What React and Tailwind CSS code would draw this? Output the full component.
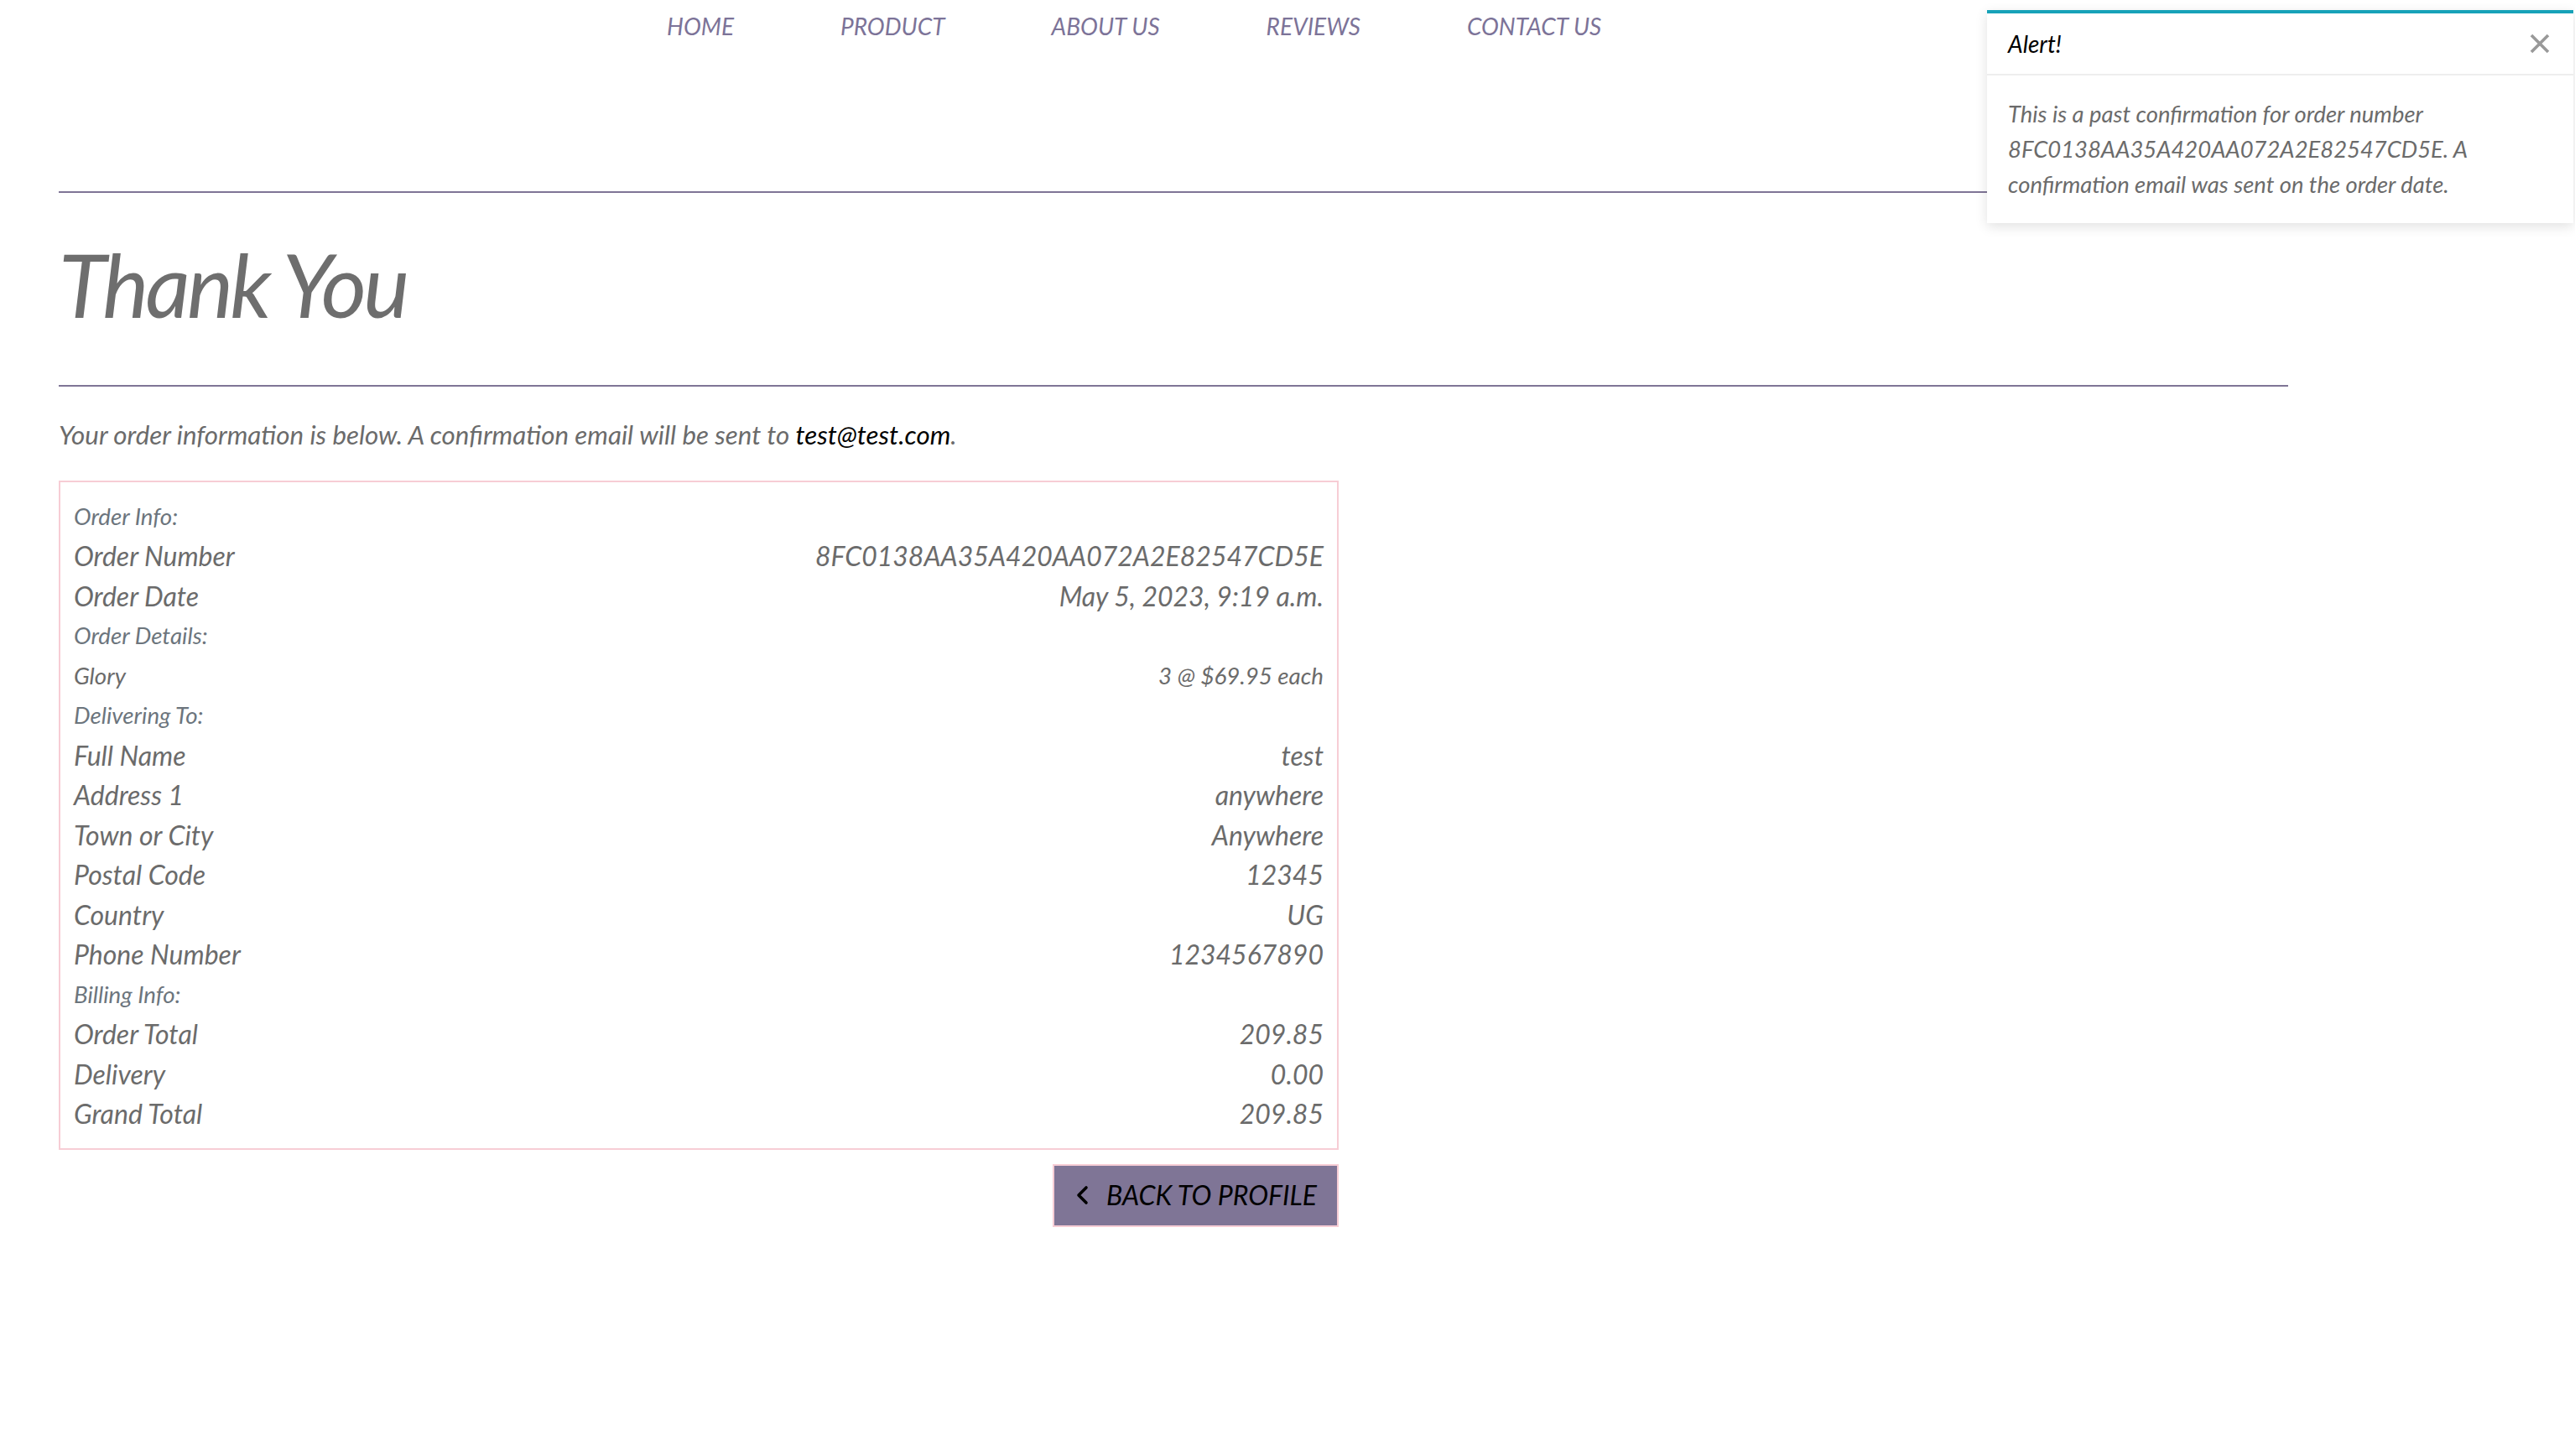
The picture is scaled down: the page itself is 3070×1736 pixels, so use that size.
import React from "react";

const rows = [
  { type: "head", label: "Order Info:" },
  { type: "big", label: "Order Number", value: "8FC0138AA35A420AA072A2E82547CD5E" },
  { type: "big", label: "Order Date", value: "May 5, 2023, 9:19 a.m." },
  { type: "head", label: "Order Details:" },
  { type: "small", label: "Glory", value: "3 @ $69.95 each" },
  { type: "head", label: "Delivering To:" },
  { type: "big", label: "Full Name", value: "test" },
  { type: "big", label: "Address 1", value: "anywhere" },
  { type: "big", label: "Town or City", value: "Anywhere" },
  { type: "big", label: "Postal Code", value: "12345" },
  { type: "big", label: "Country", value: "UG" },
  { type: "big", label: "Phone Number", value: "1234567890" },
  { type: "head", label: "Billing Info:" },
  { type: "big", label: "Order Total", value: "209.85" },
  { type: "big", label: "Delivery", value: "0.00" },
  { type: "big", label: "Grand Total", value: "209.85" },
];

function Row({ r }) {
  if (r.type === "head") {
    return (
      <div className="flex h-[47.5px] items-center text-[27.7px] text-[#6c757d]">
        {r.label}
      </div>
    );
  }
  if (r.type === "small") {
    return (
      <div className="flex h-[47.5px] items-center justify-between text-[27.7px] text-[#6b6b6b]">
        <span>{r.label}</span>
        <span>{r.value}</span>
      </div>
    );
  }
  return (
    <div className="flex h-[47.5px] items-center justify-between text-[32px] text-[#6b6b6b]">
      <span>{r.label}</span>
      <span>{r.value}</span>
    </div>
  );
}

export default function App() {
  return (
    <div className="relative min-h-[1736px] bg-white font-['Lato',sans-serif] italic">
      <nav className="flex gap-[127px] pl-[795px] pt-[10px] text-[28px] leading-[42px] uppercase text-[#7c7398]">
        <span>Home</span>
        <span>Product</span>
        <span>About Us</span>
        <span>Reviews</span>
        <span>Contact Us</span>
      </nav>

      <div className="ml-[70px] w-[2658px]">
        <div className="mt-[176px] h-[2px] bg-[#7f7596]" />
        <h1 className="mt-[47px] text-[104px] leading-[1.2] font-normal tracking-[-0.036em] text-[#6e6e6e]">
          Thank You
        </h1>
        <div className="mt-[57px] h-[2px] bg-[#7f7596]" />
        <p className="mt-[36px] text-[31.3px] leading-[42px] text-[#6b6b6b]">
          Your order information is below. A confirmation email will be sent to{" "}
          <span className="text-black">test@test.com</span>.
        </p>

        <div className="mt-[34px] w-[1526px]">
          <div className="border-2 border-[#f7cdd5] px-[16px] py-[17px]">
            {rows.map((r, i) => (
              <Row key={i} r={r} />
            ))}
          </div>
          <div className="mt-[17px] flex justify-end">
            <button className="flex h-[75px] w-[341px] items-center gap-[18px] border-2 border-[#f7cdd5] bg-[#7f7596] pl-[24px] text-[32px] italic uppercase text-black">
              <svg width="20" height="26" viewBox="0 0 20 26" fill="none" stroke="black" strokeWidth="3.6" strokeLinecap="round" strokeLinejoin="round">
                <path d="M14 4 L5 13 L14 22" />
              </svg>
              <span>Back to Profile</span>
            </button>
          </div>
        </div>
      </div>

      <div className="absolute right-[2px] top-[12px] w-[699px] border-t-4 border-[#17a2b8] bg-white shadow-[0_4px_14px_rgba(0,0,0,0.12)]">
        <div className="flex h-[74px] items-center justify-between border-b-2 border-[#eeeeee] pl-[25px] pr-[28px]">
          <span className="text-[28px] text-black">Alert!</span>
          <svg width="24" height="24" viewBox="0 0 24 24" stroke="#999999" strokeWidth="3.6" strokeLinecap="butt">
            <path d="M2 2 L22 22 M22 2 L2 22" />
          </svg>
        </div>
        <div className="px-[25px] pt-[25px] pb-[25px] text-[27.4px] leading-[42px] text-[#6b6b6b]">
          This is a past confirmation for order number 8FC0138AA35A420AA072A2E82547CD5E. A confirmation email was sent on the order date.
        </div>
      </div>
    </div>
  );
}
